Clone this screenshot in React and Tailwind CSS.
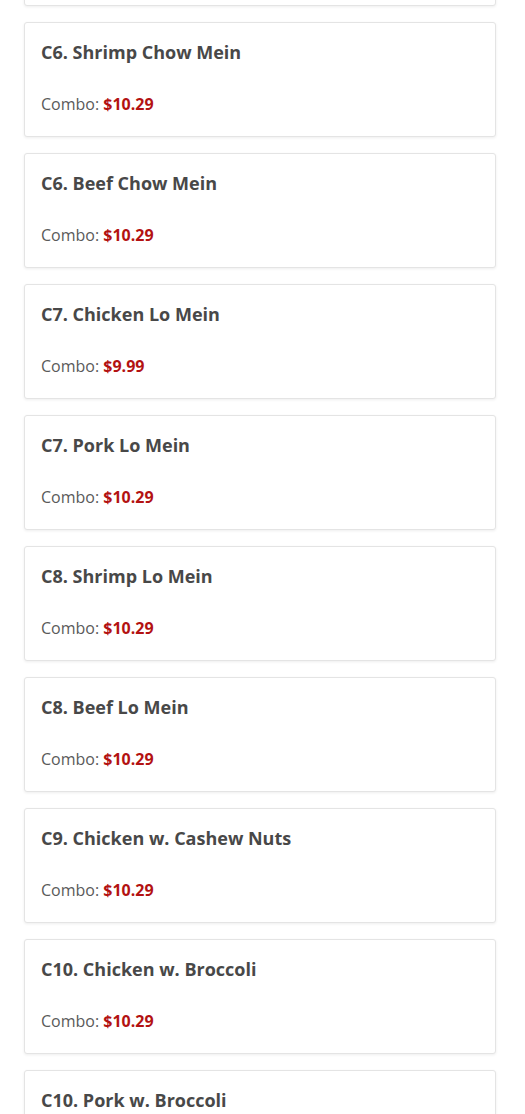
import React from 'react';

const items = [
  { name: 'C5. Beef w. Broccoli', price: '$10.29' },
  { name: 'C6. Shrimp Chow Mein', price: '$10.29' },
  { name: 'C6. Beef Chow Mein', price: '$10.29' },
  { name: 'C7. Chicken Lo Mein', price: '$9.99' },
  { name: 'C7. Pork Lo Mein', price: '$10.29' },
  { name: 'C8. Shrimp Lo Mein', price: '$10.29' },
  { name: 'C8. Beef Lo Mein', price: '$10.29' },
  { name: 'C9. Chicken w. Cashew Nuts', price: '$10.29' },
  { name: 'C10. Chicken w. Broccoli', price: '$10.29' },
  { name: 'C10. Pork w. Broccoli', price: '$10.29' },
];

export default function App() {
  return (
    <div className="h-[1114px] overflow-hidden bg-white font-['Open_Sans',sans-serif]">
      <div className="-mt-[109px] ml-6 flex w-[472px] flex-col gap-4">
        {items.map((item, i) => (
          <div
            key={i}
            className="rounded-[3px] border border-[#e4e4e4] bg-white px-4 pt-4 pb-5 shadow-[0_1px_3px_rgba(0,0,0,0.07)]"
          >
            <h3 className="text-[18px] leading-[26px] font-bold text-[#484848]">{item.name}</h3>
            <p className="mt-[27px] text-[16px] leading-[24px] text-[#5a5a5a]">
              Combo: <span className="font-bold text-[#b31212]">{item.price}</span>
            </p>
          </div>
        ))}
      </div>
    </div>
  );
}
